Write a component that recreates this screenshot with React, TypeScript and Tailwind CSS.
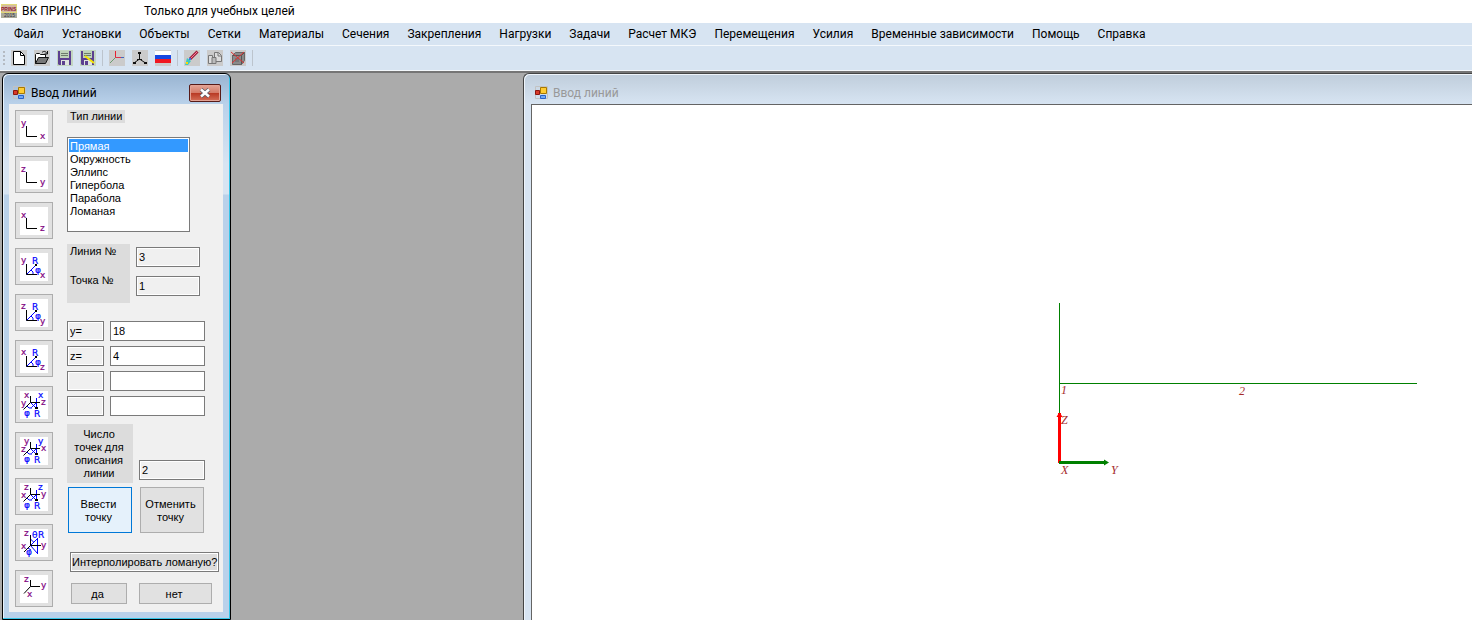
import type { ReactNode } from "react";

const menuItems = [
  "Файл", "Установки", "Объекты", "Сетки", "Материалы", "Сечения", "Закрепления", "Нагрузки",
  "Задачи", "Расчет МКЭ", "Перемещения", "Усилия", "Временные зависимости", "Помощь", "Справка",
];

const lineTypes = ["Прямая", "Окружность", "Эллипс", "Гипербола", "Парабола", "Ломаная"];

const PURPLE = "#800080";
const BLUE = "#0000ff";

function Glyph({ x, y, c = PURPLE, children }: { x: number; y: number; c?: string; children: string }) {
  return (
    <text x={x} y={y} fill={c} stroke={c} strokeWidth="0.2" fontSize="9" fontFamily="'DejaVu Sans', sans-serif">
      {children}
    </text>
  );
}

function IconCanvas({ children }: { children: ReactNode }) {
  return (
    <svg width="28" height="28" viewBox="0 0 28 28" fill="none" className="block bg-white" aria-hidden="true">
      {children}
    </svg>
  );
}

function PlaneIcon({ up, right }: { up: string; right: string }) {
  return (
    <IconCanvas>
      <path d="M6.500 11v10.500H17" stroke="#000" />
      <Glyph x={1} y={11}>{up}</Glyph>
      <Glyph x={20} y={24}>{right}</Glyph>
    </IconCanvas>
  );
}

function PolarIcon({ up, right }: { up: string; right: string }) {
  return (
    <IconCanvas>
      <path d="M6.500 21.500L16 12M11 17l2 2v2" stroke={BLUE} />
      <path d="M6.500 11v10.500H17" stroke="#000" />
      <path d="M15 11h2v2h-2z" fill="#000" />
      <Glyph x={1} y={10}>{up}</Glyph>
      <Glyph x={12} y={11} c={BLUE}>R</Glyph>
      <Glyph x={15} y={20} c={BLUE}>φ</Glyph>
      <Glyph x={20} y={25}>{right}</Glyph>
    </IconCanvas>
  );
}

function CylinderIcon({ up, left, right }: { up: string; left: string; right: string }) {
  return (
    <IconCanvas>
      <path d="M16.500 7v10M10.500 11.500l6 6M16.500 11.500l-5 5M7 15l2 2h3" stroke={BLUE} />
      <path d="M10.500 5v6.500H20M10.500 11.500L3.500 18.500" stroke="#000" />
      <path d="M15 16h3v2h-3z" fill="#000" />
      <Glyph x={4} y={7}>{up}</Glyph>
      <Glyph x={18} y={7} c={BLUE}>{up}</Glyph>
      <Glyph x={1} y={15}>{left}</Glyph>
      <Glyph x={21} y={14}>{right}</Glyph>
      <Glyph x={4} y={25} c={BLUE}>φ</Glyph>
      <Glyph x={14} y={26} c={BLUE}>R</Glyph>
    </IconCanvas>
  );
}

function SphereIcon() {
  return (
    <IconCanvas>
      <path d="M17.500 9v16M10.500 16.500l7-7M10.500 16.500l7 8M10.500 10l3 3M8 19l3 2" stroke={BLUE} />
      <path d="M10.500 6v10.500H21M10.500 16.500L4 23" stroke="#000" />
      <Glyph x={4} y={7}>z</Glyph>
      <Glyph x={12} y={9} c={BLUE}>θ</Glyph>
      <Glyph x={18} y={9} c={BLUE}>R</Glyph>
      <Glyph x={1} y={20}>x</Glyph>
      <Glyph x={21} y={19}>y</Glyph>
      <Glyph x={6} y={26} c={BLUE}>φ</Glyph>
    </IconCanvas>
  );
}

function SpaceIcon() {
  return (
    <IconCanvas>
      <path d="M10.500 5v6.500H20M10.500 11.500L4 18.500" stroke="#000" />
      <Glyph x={4} y={7}>z</Glyph>
      <Glyph x={21} y={13}>y</Glyph>
      <Glyph x={7} y={22}>x</Glyph>
    </IconCanvas>
  );
}

const coordinateModes: { name: string; icon: ReactNode }[] = [
  { name: "Плоскость xy", icon: <PlaneIcon up="y" right="x" /> },
  { name: "Плоскость yz", icon: <PlaneIcon up="z" right="y" /> },
  { name: "Плоскость zx", icon: <PlaneIcon up="x" right="z" /> },
  { name: "Полярные xy", icon: <PolarIcon up="y" right="x" /> },
  { name: "Полярные yz", icon: <PolarIcon up="z" right="y" /> },
  { name: "Полярные zx", icon: <PolarIcon up="x" right="z" /> },
  { name: "Цилиндрические x", icon: <CylinderIcon up="x" left="y" right="z" /> },
  { name: "Цилиндрические y", icon: <CylinderIcon up="y" left="z" right="x" /> },
  { name: "Цилиндрические z", icon: <CylinderIcon up="z" left="x" right="y" /> },
  { name: "Сферические", icon: <SphereIcon /> },
  { name: "Декартовы", icon: <SpaceIcon /> },
];

function ToolSvg({ children }: { children: ReactNode }) {
  return (
    <svg width="16" height="16" viewBox="0 0 16 16" fill="none" aria-hidden="true">
      <path d="M0 0h16v16H0z" fill="#cbcbcb" />
      {children}
    </svg>
  );
}

function Floppy() {
  return (
    <>
      <path d="M0 0h16v16H0z" fill="#c3d6c1" />
      <path d="M1 1h13v14H2l-1-1z" fill="#5c4090" />
      <path d="M3 1h9v7H3z" fill="#bed3b8" />
      <path d="M4 3.500h7M4 5.500h7" stroke="#6c7b6c" />
      <path d="M4 10h8v5H4z" fill="#dfe3df" />
      <path d="M5 11h3v4H5z" fill="#5c4090" />
    </>
  );
}

const toolGroups: { name: string; icon: ReactNode }[][] = [
  [
    {
      name: "Новый",
      icon: <ToolSvg><path d="M2.500 1.500h7l4 4v9h-11z" fill="#fff" stroke="#000" /><path d="M9.500 1.500v4h4" stroke="#000" /></ToolSvg>,
    },
    {
      name: "Открыть",
      icon: (
        <ToolSvg>
          <path d="M1.500 13.500v-9l1-1h3l1 1h5v3" fill="#fff" stroke="#111" />
          <path d="M1.500 13.500l3-6h10l-3 6z" fill="#777" stroke="#111" />
          <path d="M8 2.500c2-2 4-1 5 1M13.500 1v3h-3" stroke="#111" />
        </ToolSvg>
      ),
    },
    { name: "Сохранить", icon: <ToolSvg><Floppy /></ToolSvg> },
    { name: "Сохранить как", icon: <ToolSvg><Floppy /><path d="M5 6l9 7" stroke="#f5e600" strokeWidth="2" /></ToolSvg> },
  ],
  [
    {
      name: "Оси",
      icon: <ToolSvg><path d="M6.500 1v7" stroke="#e8202e" /><path d="M6.500 7.500H15" stroke="#e0304a" /><path d="M12 7.500h3" stroke="#4068c0" /><path d="M6.500 7.500L1 13" stroke="#6a9a70" /></ToolSvg>,
    },
    {
      name: "Изометрия",
      icon: <ToolSvg><path d="M7.500 3v6L2 13M7.500 9l6 4M5 9.500h5" stroke="#111" /><path d="M6 2h3v2H6zM1 12h3v2H1zM12 12h3v2h-3z" fill="#111" /></ToolSvg>,
    },
    {
      name: "Язык",
      icon: <ToolSvg><path d="M0 1h16v4H0z" fill="#fff" /><path d="M0 5h16v4H0z" fill="#1748e0" /><path d="M0 9h16v4H0z" fill="#f01822" /></ToolSvg>,
    },
  ],
  [
    {
      name: "Кисть",
      icon: (
        <ToolSvg>
          <path d="M13.500 1.500L6 9" stroke="#a31f3c" strokeWidth="3" />
          <path d="M13 2L7 8" stroke="#ef8097" />
          <path d="M3 8l4 3-3 4H1l1-3z" fill="#3cc8c0" />
          <path d="M2 12h2v2H2z" fill="#ffd900" /><path d="M5 8h2v2H5z" fill="#3977e8" />
        </ToolSvg>
      ),
    },
    {
      name: "Копировать",
      icon: (
        <ToolSvg>
          <path d="M7.500 2.500h4l3 3v6h-7z" fill="#ddd" stroke="#777" />
          <path d="M1.500 5.500h4v8h-4z" fill="#ddd" stroke="#777" />
          <path d="M5 7.500h4v6H5z" fill="#bbb" stroke="#777" />
          <path d="M11 3v3h3" stroke="#777" />
        </ToolSvg>
      ),
    },
    {
      name: "Удалить вид",
      icon: (
        <ToolSvg>
          <path d="M2.500 5.500l3-3h9v8l-3 4h-9z" fill="#8a8a8a" stroke="#666" />
          <path d="M2.500 5.500h9v9M11.500 5.500l3-3" stroke="#555" />
          <path d="M5 8h4v4H5z" fill="#777" />
          <path d="M1 2l13 11M14 2L2 13" stroke="#e03030" />
        </ToolSvg>
      ),
    },
  ],
];

function FormIcon() {
  return (
    <svg width="13" height="13" viewBox="0 0 13 13" fill="none" aria-hidden="true">
      <path d="M.5.5h12v12H.500z" stroke="#c2c2c2" />
      <path d="M5.500 1.500h6v6h-6z" fill="#ffcc33" stroke="#a87900" />
      <path d="M.5 4.500h4v4h-4z" fill="#d83a2a" stroke="#8c1610" />
      <path d="M5.500 9.500h5v3h-5z" fill="#6fa8f5" stroke="#2a62c8" />
    </svg>
  );
}

const ui = "font-[Roboto,'Open_Sans',sans-serif] text-[12px] leading-4";
const readOnlyBox = "h-5 border border-[#7a7a7a] bg-[#f0f0f0] px-[2px] shadow-[inset_0_0_0_1px_#fff]";
const editBox = "h-5 border border-[#7a7a7a] bg-white px-[2px]";
const pushButton = "border border-[#adadad] bg-[#e1e1e1] pt-px pr-[3px] text-center leading-[13px]";

function LinesDialog() {
  return (
    <section
      aria-label="Ввод линий"
      className="flex w-[229px] shrink-0 flex-col rounded-t-[6px] border border-black bg-[#b9d1ea] bg-[linear-gradient(#99b4d1,#b9d1ea_30px,#d7e4f2_90px,#d7e4f2_120px,#b9d1ea_121px)] pr-[7px] pb-[7px] pl-[6px] shadow-[inset_-1px_-1px_0_#35c5e8,inset_1px_1px_0_#e8f2fb]"
    >
      <header className="flex h-[30px] items-center gap-[5px] pt-[7px] pr-[2px] pl-[4px]">
        <FormIcon />
        <h2 className={ui}>Ввод линий</h2>
        <button
          type="button"
          aria-label="Закрыть"
          className="ml-auto flex h-[18px] w-8 items-center justify-center rounded-[2px] border border-[#571b18] bg-[linear-gradient(#e4a596,#d57b68_48%,#b93a24_52%,#d56f58)] shadow-[inset_0_0_0_1px_#e3a294]"
        >
          <svg width="12" height="10" viewBox="0 0 12 10" fill="none" aria-hidden="true">
            <path d="M2 1.500l8 7M10 1.500l-8 7" stroke="#555a68" strokeWidth="4" />
            <path d="M2 1.500l8 7M10 1.500l-8 7" stroke="#fff" strokeWidth="2.500" />
          </svg>
        </button>
      </header>
      <div className="flex flex-1 gap-[14px] bg-[#f0f0f0] px-[6px] pt-[6px] font-['Liberation_Sans',Arial,sans-serif] text-[11px] leading-[13px]">
        <div className="flex flex-col gap-[9px]">
          {coordinateModes.map((mode) => (
            <button
              key={mode.name}
              type="button"
              aria-label={mode.name}
              className="flex h-[37px] w-[38px] items-center justify-center border border-[#adadad] bg-[#e1e1e1]"
            >
              {mode.icon}
            </button>
          ))}
        </div>
        <form className="flex flex-col items-start" onSubmit={(e) => e.preventDefault()}>
          <label htmlFor="line-type" className="bg-[#dcdcdc] px-[3px]">Тип линии</label>
          <select
            id="line-type"
            size={6}
            defaultValue="Прямая"
            className="mt-[14px] h-[95px] w-[123px] overflow-hidden border border-[#7a7a7a] bg-white p-px"
          >
            {lineTypes.map((type) => (
              <option
                key={type}
                className="h-[13px] min-h-0 p-0 pt-px pl-px text-[11px] leading-[13px] checked:bg-[linear-gradient(#3399ff,#3399ff)]! checked:text-white!"
              >
                {type}
              </option>
            ))}
          </select>
          <div className="mt-3 flex gap-[6px]">
            <div className="flex h-[59px] w-[63px] flex-col gap-4 bg-[#dcdcdc] px-[3px] pt-px">
              <label htmlFor="line-no">Линия №</label>
              <label htmlFor="point-no">Точка №</label>
            </div>
            <div className="flex flex-col gap-[9px] pt-[3px]">
              <input id="line-no" readOnly defaultValue="3" className={`${readOnlyBox} w-16`} />
              <input id="point-no" readOnly defaultValue="1" className={`${readOnlyBox} w-16`} />
            </div>
          </div>
          <div className="mt-[18px] flex flex-col gap-[5px]">
            {[["y=", "18"], ["z=", "4"], ["", ""], ["", ""]].map(([name, value], i) => (
              <div key={i} className="flex gap-[6px]">
                <input readOnly aria-label={`Имя координаты ${i + 1}`} defaultValue={name} className={`${readOnlyBox} w-[37px]`} />
                <input aria-label={`Координата ${i + 1}`} defaultValue={value} className={`${editBox} w-[95px]`} />
              </div>
            ))}
          </div>
          <div className="mt-2 flex items-end gap-[6px]">
            <label htmlFor="point-count" className="h-[59px] w-[66px] bg-[#dcdcdc] pt-[4px] pr-2 pl-[6px] text-center">
              Число точек для описания линии
            </label>
            <input id="point-count" readOnly defaultValue="2" className={`${readOnlyBox} mb-[3px] w-[66px]`} />
          </div>
          <div className="mt-[4px] flex gap-2 pl-px">
            <button type="button" className="h-[46px] w-16 border border-[#0078d7] bg-[#e5f1fb] pt-px pr-[3px] text-center">Ввести<br />точку</button>
            <button type="button" className={`${pushButton} h-[46px] w-16`}>Отменить<br />точку</button>
          </div>
          <p className="mt-[19px] ml-[3px] h-5 border border-[#7a7a7a] bg-[#dcdcdc] px-px pt-[3px] whitespace-nowrap shadow-[inset_0_0_0_1px_#fff]">
            Интерполировать ломаную?
          </p>
          <div className="mt-[11px] flex gap-3 pl-1">
            <button type="button" className={`${pushButton} h-[21px] w-14`}>да</button>
            <button type="button" className={`${pushButton} h-[21px] w-[73px]`}>нет</button>
          </div>
        </form>
      </div>
    </section>
  );
}

function DrawingWindow() {
  return (
    <section
      aria-label="Чертёж"
      className="flex min-w-0 flex-1 flex-col rounded-tl-[6px] border-t border-l border-[#444] bg-[#d7e4f2] bg-[linear-gradient(#bfcddb,#d7e4f2_30px)] pl-[7px] shadow-[inset_1px_1px_0_#eef4fa]"
    >
      <header className="flex h-[30px] items-center gap-[5px] pt-[7px] pl-[4px]">
        <FormIcon />
        <h2 className={`${ui} text-[#999]`}>Ввод линий</h2>
      </header>
      <div className="flex flex-1 border-t border-l border-[#646464] bg-white">
        <svg className="w-full" fill="none" role="img" aria-label="Линии 1 и 2">
          <path d="M527.500 308v50" stroke="#f00" strokeWidth="3" />
          <path d="M527.500 307l3 5h-6z" fill="#f00" />
          <path d="M527.500 198v110M527.500 278.500H885" stroke="#008000" />
          <path d="M527 357.500h46" stroke="#008000" strokeWidth="3" />
          <path d="M572 354.500l5 3-5 3z" fill="#008000" />
          <g fill="#a52a2a" fontSize="12" fontStyle="italic" fontFamily="'Liberation Serif', serif">
            <text x="529" y="289">1</text>
            <text x="707" y="290">2</text>
            <text x="529" y="319">Z</text>
            <text x="529" y="369">X</text>
            <text x="579" y="369">Y</text>
          </g>
        </svg>
      </div>
    </section>
  );
}

export default function App() {
  return (
    <div className="flex min-h-screen flex-col overflow-hidden bg-[#ababab] text-black">
      <header className={`flex h-[23px] items-center bg-white pb-px pl-px ${ui}`}>
        <svg width="16" height="16" viewBox="0 0 16 16" aria-hidden="true">
          <path d="M0 1h16v14H0z" fill="#aaa99b" />
          <path d="M0 1h16v9H0z" fill="#e0d878" />
          <path d="M1 2h14v7H1z" fill="#d5b9a0" />
          <text x="0" y="8" fontSize="5" fontWeight="bold" fill="#8d1838" fontFamily="'Liberation Sans', sans-serif">PRINS</text>
          <text x="3" y="14" fontSize="5" fill="#334" fontFamily="'Liberation Sans', sans-serif">2015</text>
        </svg>
        <h1 className="ml-[5px] w-[122px]">ВК ПРИНС</h1>
        <span>Только для учебных целей</span>
      </header>
      <nav className={`flex h-[22px] items-center gap-[18px] bg-[#d7e4f2] pl-[14px] whitespace-nowrap ${ui}`}>
        {menuItems.map((item) => (
          <button key={item} type="button">{item}</button>
        ))}
      </nav>
      <div role="toolbar" aria-label="Панель инструментов" className="flex h-[26px] items-center border-y border-[#f4f8fc] bg-[#d7e4f2] pl-[3px]">
        <svg width="2" height="14" viewBox="0 0 2 14" aria-hidden="true">
          <path d="M0 0h2v2H0zM0 4h2v2H0zM0 8h2v2H0zM0 12h2v2H0z" fill="#b4bac2" />
        </svg>
        {toolGroups.map((group, i) => (
          <div key={i} className="flex gap-[7px] border-r border-[#bcc4cd] px-[6px]">
            {group.map((tool) => (
              <button key={tool.name} type="button" aria-label={tool.name}>{tool.icon}</button>
            ))}
          </div>
        ))}
      </div>
      <main className="flex flex-1 gap-[292px] border-t-2 border-[#757575] pl-[2px]">
        <LinesDialog />
        <DrawingWindow />
      </main>
    </div>
  );
}
